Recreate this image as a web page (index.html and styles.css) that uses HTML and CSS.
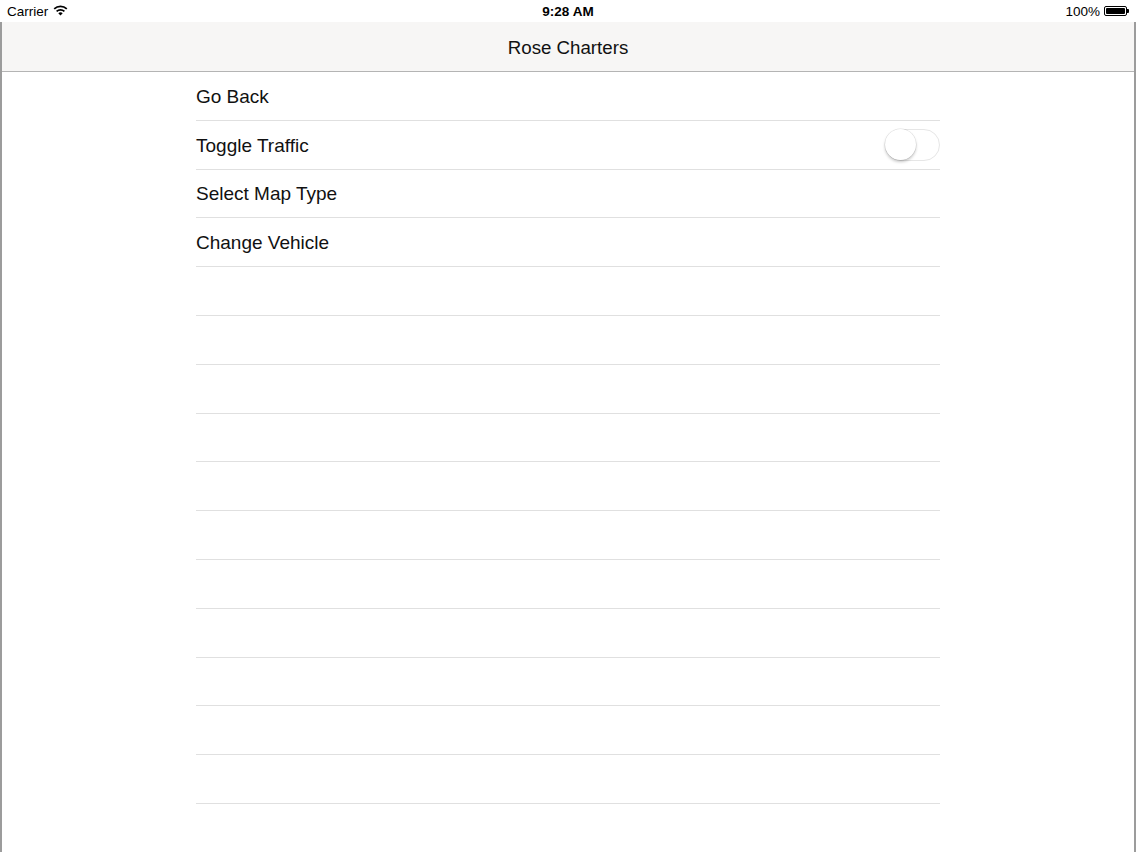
FILE: index.html
```html
<!DOCTYPE html>
<html>
<head>
<meta charset="utf-8">
<link rel="stylesheet" href="styles.css">
</head>
<body>
<div class="status">
  <div class="status-left">Carrier
    <svg class="wifi" width="15" height="11" viewBox="0 0 15 11">
      <path d="M7.5 10.5 L5.3 8.2 A3.2 3.2 0 0 1 9.7 8.2 Z" fill="#000"/>
      <path d="M3.6 6.4 A5.6 5.6 0 0 1 11.4 6.4" fill="none" stroke="#000" stroke-width="1.7"/>
      <path d="M1.2 3.9 A9 9 0 0 1 13.8 3.9" fill="none" stroke="#000" stroke-width="1.7"/>
    </svg>
  </div>
  <div class="status-time">9:28 AM</div>
  <div class="status-right">100%
    <span class="battery"><span class="battery-fill"></span></span><span class="battery-tip"></span>
  </div>
</div>
<div class="frame">
  <div class="navbar">Rose Charters</div>
  <div class="list">
    <div class="row">Go Back</div>
    <div class="row row-toggle"><span>Toggle Traffic</span><span class="switch"><span class="knob"></span></span></div>
    <div class="row">Select Map Type</div>
    <div class="row">Change Vehicle</div>
    <div class="row"></div>
    <div class="row"></div>
    <div class="row"></div>
    <div class="row"></div>
    <div class="row"></div>
    <div class="row"></div>
    <div class="row"></div>
    <div class="row"></div>
    <div class="row"></div>
    <div class="row"></div>
    <div class="row"></div>
  </div>
</div>
</body>
</html>
```
FILE: styles.css
```css
html, body {
  margin: 0;
  padding: 0;
  background: #fff;
  font-family: "Liberation Sans", Arial, sans-serif;
  color: #000;
}
body {
  width: 1136px;
  height: 852px;
  overflow: hidden;
}
.status {
  height: 22px;
  display: flex;
  align-items: center;
  justify-content: space-between;
  padding: 0 7px;
  font-size: 13.5px;
  position: relative;
}
.status-left {
  display: flex;
  align-items: center;
  gap: 5px;
}
.wifi { margin-top: -1px; }
.status-time {
  position: absolute;
  left: 0;
  right: 0;
  text-align: center;
  font-weight: bold;
  font-size: 13.5px;
}
.status-right {
  display: flex;
  align-items: center;
  gap: 3px;
}
.battery {
  display: inline-block;
  width: 23px;
  height: 10px;
  border: 1px solid #000;
  border-radius: 2px;
  padding: 1px;
  box-sizing: border-box;
  margin-left: 1px;
}
.battery-fill {
  display: block;
  width: 100%;
  height: 100%;
  background: #000;
  border-radius: 1px;
}
.battery-tip {
  display: inline-block;
  width: 2px;
  height: 4px;
  background: #000;
  margin-left: -3px;
  border-radius: 0 1px 1px 0;
}
.frame {
  height: 830px;
  border-left: 2px solid #9c9c9c;
  border-right: 2px solid #9c9c9c;
  box-sizing: border-box;
}
.navbar {
  height: 50px;
  box-sizing: border-box;
  padding-top: 2px;
  background: #f7f6f5;
  border-bottom: 1px solid #b4b4b4;
  display: flex;
  align-items: center;
  justify-content: center;
  font-size: 18.7px;
  color: #111;
}
.list {
  margin: 0 194px 0 194px;
}
.row {
  height: 46.8px;
  padding-top: 1px;
  box-sizing: content-box;
  border-bottom: 1px solid #e0e0e0;
  display: flex;
  align-items: center;
  font-size: 19px;
  color: #111;
  line-height: 1;
}
.row-toggle {
  justify-content: space-between;
}
.switch {
  display: block;
  width: 55px;
  height: 32px;
  margin-top: -1px;
  border: 1.5px solid #e6e6e6;
  border-radius: 16px;
  box-sizing: border-box;
  position: relative;
  background: #fff;
}
.knob {
  position: absolute;
  left: -1px;
  top: -1px;
  width: 31px;
  height: 31px;
  border-radius: 50%;
  background: #fff;
  box-shadow: 0 2px 3px rgba(0,0,0,0.22), 0 0 0 0.5px rgba(0,0,0,0.12);
}
```
